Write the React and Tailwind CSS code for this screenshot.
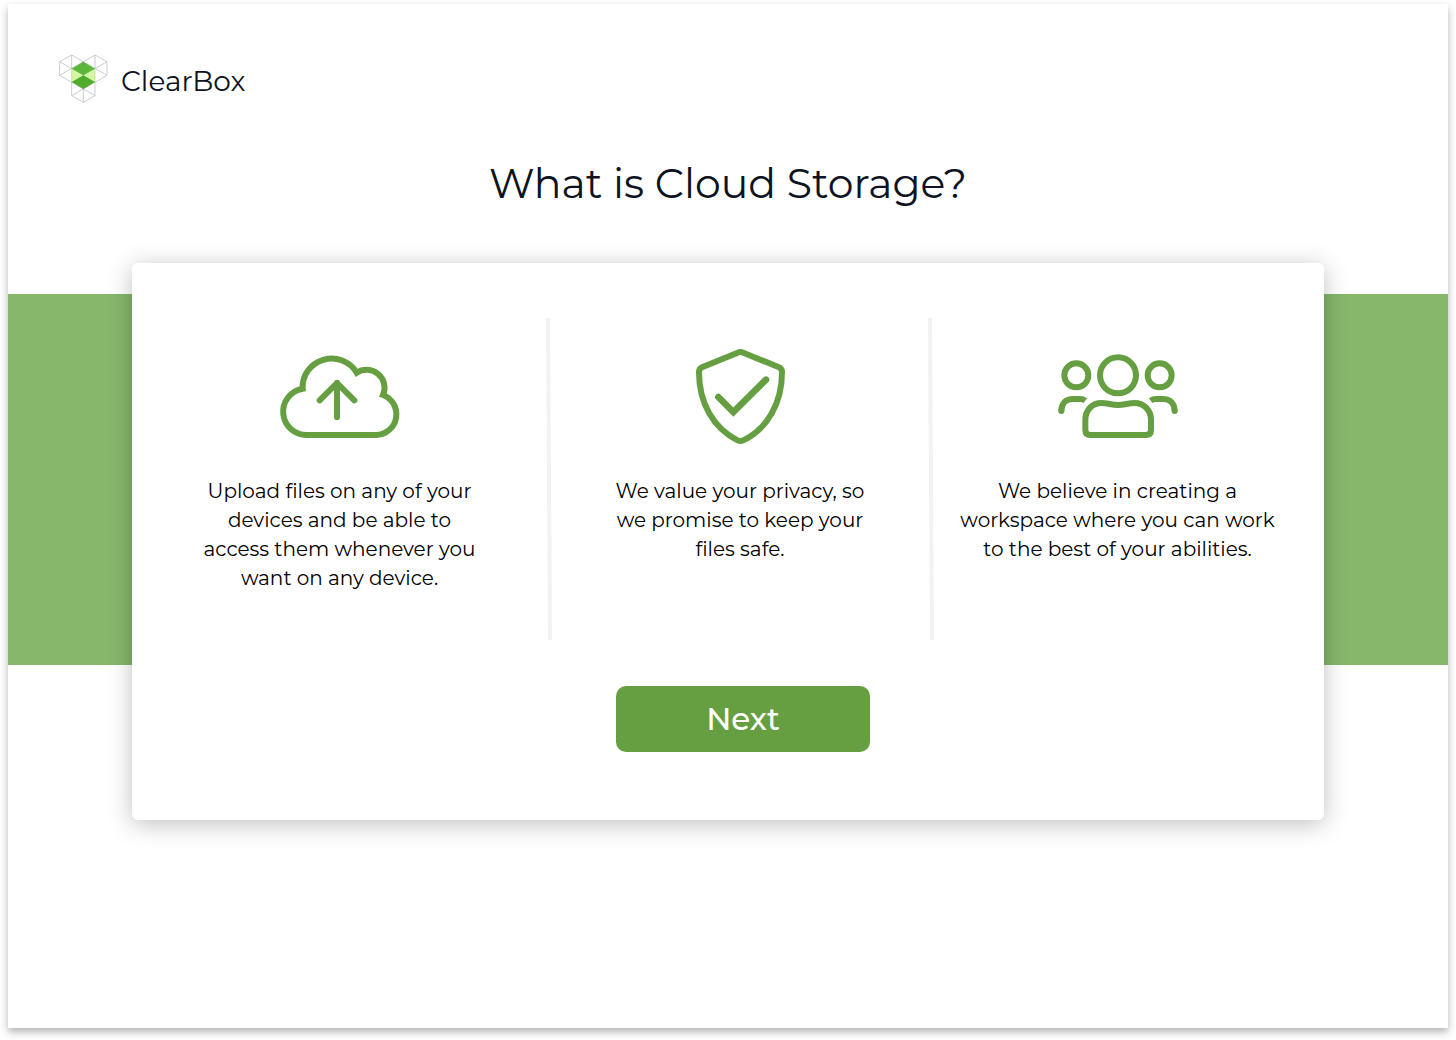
import React from "react";

function Logo() {
  return (
    <svg viewBox="0 0 147 147" className="size-[49px]" fill="none" aria-hidden="true">
      <g stroke="#c0c2c9" strokeWidth="2.5" strokeLinejoin="round">
        <path d="M2 23 38 3 73 23V64L38 85 2 64ZM2 23 38 44 73 64M38 3V44M2 64 73 23" />
        <path d="M144 23 108 3 73 23V64L108 85 144 64ZM144 23 108 44 73 64M108 3V44M144 64 73 23" />
        <path d="M38 84V125L73 145 108 125V84L73 105ZM73 105V145M38 125 73 105 108 125" />
      </g>
      <path d="M38 44 73 64 38 84ZM108 44 73 64 108 84Z" fill="#d5f8a5" />
      <path d="M73 23 108 44 73 64 38 44Z" fill="#5db83b" />
      <path d="M73 64 108 84 73 105 38 84Z" fill="#50ad2c" />
      <path d="M38 44V84M108 44V84M73 23V105" stroke="#5a9a45" strokeOpacity=".4" strokeWidth="2" />
    </svg>
  );
}

function CloudIcon() {
  return (
    <svg viewBox="0 0 420 330" className="h-[110px] w-[140px]" fill="none" stroke="#669f41" strokeWidth="18" aria-hidden="true">
      <path d="M112 285A70 70 0 0 1 98 146A87 85 0 0 1 260 98A54 54 0 0 1 339 165A62 62 0 0 1 318 285Z" />
      <path d="M201 232V128M149 181 201 129 253 181" strokeLinecap="round" strokeLinejoin="round" />
    </svg>
  );
}

function ShieldIcon() {
  return (
    <svg viewBox="0 0 363 330" className="h-[110px] w-[121px]" fill="none" stroke="#669f41" strokeWidth="18" aria-hidden="true">
      <path d="M57 97Q57 86 66 82L173 38Q181 34 190 38L297 82Q306 86 306 97C306 190 262 266 190 301Q181 305 173 301C101 266 57 190 57 97Z" />
      <path d="M115 171 160 216 258 119" strokeLinecap="round" strokeLinejoin="miter" strokeWidth="20" />
    </svg>
  );
}

function PeopleIcon() {
  return (
    <svg viewBox="0 0 420 330" className="h-[110px] w-[140px]" fill="none" stroke="#669f41" strokeWidth="18" aria-hidden="true">
      <circle cx="210" cy="106" r="54" />
      <circle cx="85" cy="106" r="36" />
      <circle cx="335" cy="106" r="36" />
      <path d="M112 270V240C112 208 135 189 160 189C180 189 190 195 210 195C230 195 240 189 260 189C285 189 309 208 309 240V270Q309 285 294 285H127Q112 285 112 270Z" />
      <path d="M40 214C40 190 54 177 75 177H96Q105 177 112 182M380 214C380 190 366 177 345 177H324Q315 177 308 182" />
      <g fill="#669f41" stroke="none">
        <circle cx="40" cy="213" r="9" />
        <circle cx="380" cy="213" r="9" />
      </g>
    </svg>
  );
}

function Feature({ icon, lines, className = "" }) {
  return (
    <article className={`flex flex-col items-center pt-[22px] ${className}`}>
      {icon}
      <p className="mt-[27px] text-center text-[20px] leading-[29px] text-black">
        {lines.map((line) => (
          <span key={line} className="block whitespace-nowrap">{line}</span>
        ))}
      </p>
    </article>
  );
}

function Divider() {
  return <div className="h-[322px] w-1 skew-x-[0.36deg] bg-[#f2f2f3]" />;
}

export default function App() {
  return (
    <div className="flex min-h-screen flex-col bg-white px-2 pt-1 pb-3 font-['Montserrat',Inter,sans-serif]">
      <main className="flex grow flex-col bg-white shadow-[0_4px_8px_rgba(0,0,0,0.3)]">
        <header className="flex items-center gap-[13px] px-[51px] pt-[50px]">
          <Logo />
          <span className="pt-1 text-[28px] leading-9 text-[#0d1321]">ClearBox</span>
        </header>
        <h1 className="mt-[52px] text-center text-[41px] leading-[56px] text-[#0d1321]">
          What is Cloud Storage?
        </h1>
        <section className="mt-[52px] grid">
          <div className="col-start-1 row-start-1 mt-[31px] h-[371px] bg-[#87b76a]" />
          <div className="z-10 col-start-1 row-start-1 mx-[124px] rounded-md bg-white pt-[55px] pb-[68px] shadow-[0_4px_24px_rgba(0,0,0,0.25)]">
            <div className="grid grid-cols-[415fr_4px_378fr_4px_391fr]">
              <Feature
                icon={<CloudIcon />}
                lines={["Upload files on any of your", "devices and be able to", "access them whenever you", "want on any device."]}
              />
              <Divider />
              <Feature
                icon={<ShieldIcon />}
                lines={["We value your privacy, so", "we promise to keep your", "files safe."]}
              />
              <Divider />
              <Feature
                className="pr-[22px]"
                icon={<PeopleIcon />}
                lines={["We believe in creating a", "workspace where you can work", "to the best of your abilities."]}
              />
            </div>
            <div className="mt-[46px] flex justify-center pl-[30px]">
              <button type="button" className="h-[66px] w-[254px] rounded-[10px] bg-[#669f41] text-[31px] font-medium text-white">
                Next
              </button>
            </div>
          </div>
        </section>
      </main>
    </div>
  );
}
